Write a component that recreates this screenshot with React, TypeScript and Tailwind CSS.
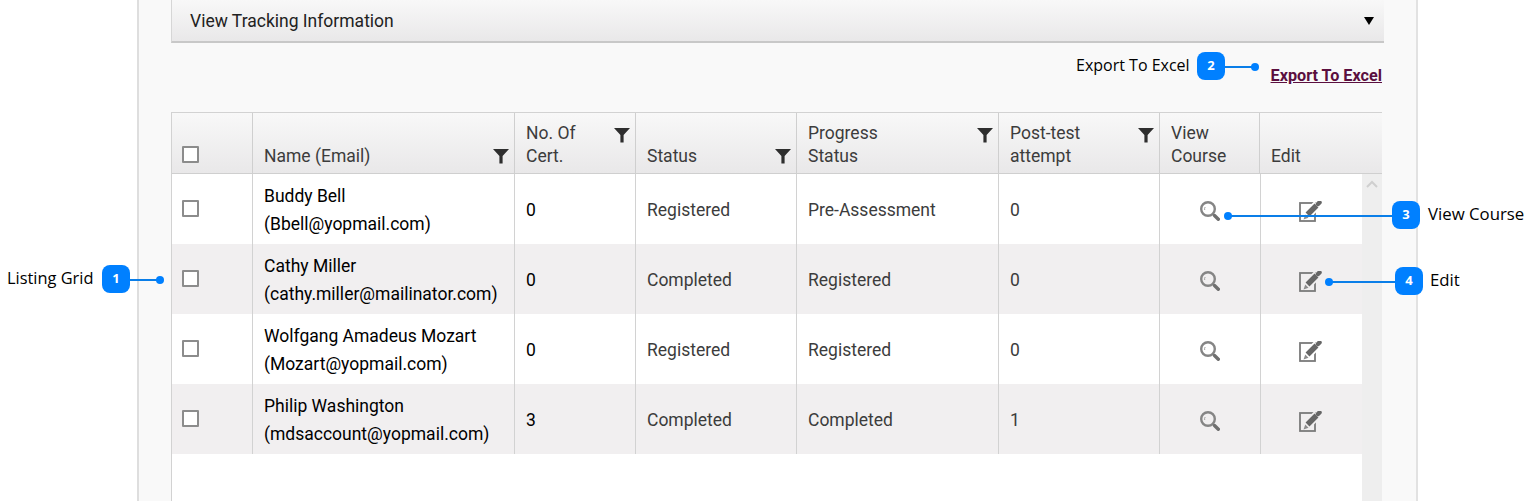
const font = "font-['Roboto',sans-serif]";

const cols = ['w-[81px]', 'w-[262px]', 'w-[121px]', 'w-[161px]', 'w-[202px]', 'w-[161px]', 'w-[101px]'];

const rows = [
  { name: 'Buddy Bell', email: '(Bbell@yopmail.com)', cert: '0', status: 'Registered', progress: 'Pre-Assessment', attempt: '0' },
  { name: 'Cathy Miller', email: '(cathy.miller@mailinator.com)', cert: '0', status: 'Completed', progress: 'Registered', attempt: '0' },
  { name: 'Wolfgang Amadeus Mozart', email: '(Mozart@yopmail.com)', cert: '0', status: 'Registered', progress: 'Registered', attempt: '0' },
  { name: 'Philip Washington', email: '(mdsaccount@yopmail.com)', cert: '3', status: 'Completed', progress: 'Completed', attempt: '1' },
];

function FilterIcon({ className }: { className: string }) {
  return (
    <svg className={`absolute ${className}`} width="16" height="16" viewBox="0 0 16 16">
      <path d="M0 1h16L9.6 8v7.5H6.4V8z" fill="#2e2e2e" />
    </svg>
  );
}

function SearchIcon() {
  return (
    <svg width="20" height="20" viewBox="0 0 20 20" fill="none">
      <circle cx="8" cy="8" r="6.8" stroke="#858585" strokeWidth="2.4" />
      <path d="M4.700 9a3.500 3.500 0 0 1 .5-3" stroke="#a0a0a0" strokeWidth="1" />
      <path d="M14.500 14.500l3.800 3.800" stroke="#6f6f6f" strokeWidth="3.400" strokeLinecap="round" />
    </svg>
  );
}

function EditIcon({ bg }: { bg: string }) {
  return (
    <svg width="24" height="22" viewBox="0 0 24 22" fill="none">
      <rect x="1" y="2" width="15" height="18" stroke="#7a7a7a" strokeWidth="1.800" />
      <path d="M7 15L18.500 3.500" stroke={bg} strokeWidth="9" />
      <path d="M8.500 13.500l9-9" stroke="#666666" strokeWidth="5.500" />
      <path d="M4.500 18.500l1.800-5 3.200 3.200z" fill="#8c8c8c" />
      <path d="M19 3l1.500-1.500" stroke="#666666" strokeWidth="4.500" strokeLinecap="round" />
    </svg>
  );
}

function Checkbox() {
  return <div className="h-[17px] w-[17px] border-2 border-[#8c8c8c] bg-white box-border rounded-[1px]" />;
}

function HeadCell({ width, children, filter, last }: { width: string; children?: React.ReactNode; filter?: string; last?: boolean }) {
  return (
    <div className={`${width} relative flex items-end px-[11px] pb-[5px] leading-[23px] text-[17.5px] text-[#3c3c3c] ${last ? '' : 'border-r border-[#cfcfcf]'}`}>
      <div>{children}</div>
      {filter && <FilterIcon className={filter} />}
    </div>
  );
}

function Callout({ n, className, line, dot, label, labelClass }: { n: number; className: string; line: string; dot: string; label: string; labelClass: string }) {
  return (
    <>
      <div className={`absolute h-[1.500px] bg-[#0a7ee8] ${line}`} />
      <div className={`absolute h-2 w-2 rounded-full bg-[#0080ff] ${dot}`} />
      <div className={`absolute flex h-7 w-7 items-center justify-center rounded-lg bg-[#0080ff] text-[13px] font-bold text-white font-['Open_Sans',sans-serif] ${className}`}>{n}</div>
      <div className={`absolute leading-[22px] text-black font-['Open_Sans',sans-serif] ${labelClass}`}>{label}</div>
    </>
  );
}

export default function App() {
  return (
    <div className={`relative h-[501px] w-[1530px] overflow-hidden bg-white ${font}`}>
      <div className="ml-[137px] h-full w-[1281px] border-x-2 border-x-[#e2e2e2] border-l-[#dedede] bg-[#f9f9f9] pl-[32px]">
        <div className="flex h-[43px] w-[1213px] items-center justify-between border-b-2 border-l border-[#c8c8c8] border-l-[#d6d6d6] bg-gradient-to-b from-[#f8f8f8] to-[#e9e8e9] pl-[18px] pr-[10px]">
          <span className="pt-[2px] text-[17.5px] leading-none text-[#222]">View Tracking Information</span>
          <div className="h-0 w-0 border-x-[5px] border-t-[8px] border-x-transparent border-t-black" />
        </div>

        <div className="flex h-[69px] w-[1212px] justify-end pr-[1px] pt-[23px]">
          <a className="text-[16.2px] font-bold leading-[20px] text-[#5b0f3f] underline">Export To Excel</a>
        </div>

        <div className="relative h-[400px] w-[1211px] border-l border-t border-[#d2d2d2] bg-white">
          <div className="flex h-[61px] border-b border-[#cfcfcf] bg-gradient-to-b from-[#f8f8f8] to-[#e9e8e9]">
            <div className={`${cols[0]} flex items-end border-r border-[#cfcfcf] pb-[10px] pl-[10px]`}><Checkbox /></div>
            <HeadCell width={cols[1]} filter="right-[5px] bottom-[9px]">Name (Email)</HeadCell>
            <HeadCell width={cols[2]} filter="right-[5px] top-[14px]">No. Of<br />Cert.</HeadCell>
            <HeadCell width={cols[3]} filter="right-[5px] bottom-[9px]">Status</HeadCell>
            <HeadCell width={cols[4]} filter="right-[5px] top-[14px]">Progress<br />Status</HeadCell>
            <HeadCell width={cols[5]} filter="right-[5px] top-[14px]">Post-test<br />attempt</HeadCell>
            <HeadCell width="w-[100px]">View<br />Course</HeadCell>
            <HeadCell width="flex-1" last>Edit</HeadCell>
          </div>

          <div className="flex">
            <div className="w-[1190px]">
              {rows.map((row, i) => (
                <div key={row.name} className={`flex h-[70px] text-[17.5px] leading-7 ${i % 2 === 1 ? 'bg-[#f1eff0]' : 'bg-white'}`}>
                  <div className={`${cols[0]} flex items-center border-r border-[#d2d2d2] pb-[2px] pl-[10px]`}><Checkbox /></div>
                  <div className={`${cols[1]} flex flex-col justify-center border-r border-[#d2d2d2] px-[11px] pt-[2px] text-black`}>
                    <div>{row.name}</div>
                    <div className="whitespace-nowrap">{row.email}</div>
                  </div>
                  <div className={`${cols[2]} flex items-center border-r border-[#d2d2d2] px-[11px] pt-[2px] text-black`}>{row.cert}</div>
                  <div className={`${cols[3]} flex items-center border-r border-[#d2d2d2] px-[11px] pt-[2px] text-[#3c3c3c]`}>{row.status}</div>
                  <div className={`${cols[4]} flex items-center border-r border-[#d2d2d2] px-[11px] pt-[2px] text-[#3c3c3c]`}>{row.progress}</div>
                  <div className={`${cols[5]} flex items-center border-r border-[#d2d2d2] px-[11px] pt-[2px] text-[#3c3c3c]`}>{row.attempt}</div>
                  <div className={`${cols[6]} flex items-center justify-center border-r border-[#d2d2d2] pt-[4px]`}><SearchIcon /></div>
                  <div className="flex flex-1 items-center justify-center pr-[1px] pt-[6px]"><EditIcon bg={i % 2 === 1 ? '#f1eff0' : '#ffffff'} /></div>
                </div>
              ))}
            </div>
            <div className="relative h-[340px] flex-1 bg-[#eeeeee]">
              <svg className="absolute left-[4px] top-[6px]" width="12" height="8" viewBox="0 0 12 8" fill="none">
                <path d="M1 7l5-5 5 5" stroke="#cfcfcf" strokeWidth="2" />
              </svg>
            </div>
          </div>
        </div>
      </div>

      <Callout n={1} className="left-[102px] top-[265px]" line="left-[130px] top-[279px] w-[28px]" dot="left-[156px] top-[276px]" label="Listing Grid" labelClass="left-[7px] top-[267px] text-[16.4px]" />
      <Callout n={2} className="left-[1197px] top-[52px]" line="left-[1225px] top-[66px] w-[28px]" dot="left-[1251px] top-[63px]" label="Export To Excel" labelClass="left-[1076px] top-[54px] text-[16px]" />
      <Callout n={3} className="left-[1392px] top-[201px]" line="left-[1228px] top-[215px] w-[164px]" dot="left-[1224px] top-[212px]" label="View Course" labelClass="left-[1428px] top-[203px] text-[16.8px]" />
      <Callout n={4} className="left-[1395px] top-[267px]" line="left-[1328px] top-[281px] w-[67px]" dot="left-[1325px] top-[278px]" label="Edit" labelClass="left-[1430px] top-[269px] text-[16.8px]" />
    </div>
  );
}
